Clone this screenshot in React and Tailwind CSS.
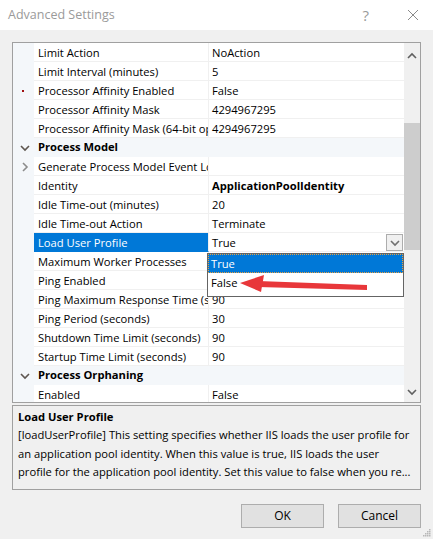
import React from 'react';

const rows = [
  { name: 'Limit Action', value: 'NoAction' },
  { name: 'Limit Interval (minutes)', value: '5' },
  { name: 'Processor Affinity Enabled', value: 'False', mark: true },
  { name: 'Processor Affinity Mask', value: '4294967295' },
  { name: 'Processor Affinity Mask (64-bit option)', value: '4294967295' },
  { category: 'Process Model' },
  { name: 'Generate Process Model Event Log Entry', value: '', expand: true },
  { name: 'Identity', value: 'ApplicationPoolIdentity', bold: true },
  { name: 'Idle Time-out (minutes)', value: '20' },
  { name: 'Idle Time-out Action', value: 'Terminate' },
  { name: 'Load User Profile', value: 'True', selected: true },
  // values under the open list are hidden by it
  { name: 'Maximum Worker Processes', value: '' },
  { name: 'Ping Enabled', value: '' },
  { name: 'Ping Maximum Response Time (seconds)', value: '90' },
  { name: 'Ping Period (seconds)', value: '30' },
  { name: 'Shutdown Time Limit (seconds)', value: '90' },
  { name: 'Startup Time Limit (seconds)', value: '90' },
  { category: 'Process Orphaning' },
  { name: 'Enabled', value: 'False' },
];

function Chevron({ dir = 'down', color = '#5b5b5b' }) {
  const d = {
    down: 'M1 3 L5 7 L9 3',
    up: 'M1 7 L5 3 L9 7',
    right: 'M3 1 L7 5 L3 9',
  }[dir];
  return (
    <svg width="10" height="10" viewBox="0 0 10 10">
      <path d={d} fill="none" stroke={color} strokeWidth="1.6" />
    </svg>
  );
}

function Row({ row }) {
  if (row.category) {
    return (
      <div className="flex h-[19px] bg-[#f4f7fa] items-center">
        <div className="w-[21px] flex justify-center pl-[2px]">
          <Chevron dir="down" color="#5e5650" />
        </div>
        <div className="pl-[4px] font-bold">{row.category}</div>
      </div>
    );
  }
  return (
    <div className="flex h-[19px]">
      <div className="w-[21px] shrink-0 bg-[#f4f7fa] flex items-center justify-center pl-[2px]">
        {row.mark && <div className="w-[2px] h-[2px] bg-[#a01010] mr-[3px]" />}
        {row.expand && <Chevron dir="right" color="#8c8c8c" />}
      </div>
      <div
        className={`w-[175px] shrink-0 overflow-hidden whitespace-nowrap pl-[4px] leading-[19px] border-b border-r ${
          row.selected ? 'bg-[#0078d7] text-white border-b-[#0078d7] border-r-[#f0f0f0]' : 'border-[#f0f0f0]'
        }`}
      >
        {row.name}
      </div>
      <div className="flex-1 relative overflow-hidden whitespace-nowrap pl-[3px] leading-[19px] border-b border-[#f0f0f0]">
        <span className={row.bold ? 'font-bold' : ''}>{row.value}</span>
        {row.selected && (
          <div className="absolute right-[1px] top-[1px] w-[17px] h-[17px] border border-[#adadad] bg-[#f0f0f0] flex items-center justify-center">
            <Chevron dir="down" color="#707070" />
          </div>
        )}
      </div>
    </div>
  );
}

export default function App() {
  return (
    <div
      className="relative w-[433px] h-[539px] bg-[#f0f0f0] text-[11.2px] text-black overflow-hidden"
      style={{ fontFamily: '"Open Sans", "Noto Sans", sans-serif' }}
    >
      {/* title bar */}
      <div className="h-[30px] bg-white flex items-center pl-[8px] pr-[14px]">
        <span className="text-[12.5px] text-[#9a9a9a] flex-1">Advanced Settings</span>
        <span className="text-[15px] text-[#9a9a9a] mr-[38px]">?</span>
        <svg width="12" height="12" viewBox="0 0 12 12">
          <path d="M1 1 L11 11 M11 1 L1 11" stroke="#8a8a8a" strokeWidth="1" />
        </svg>
      </div>

      <div className="px-[12px] pt-[12px]">
        {/* property grid */}
        <div className="h-[361px] border border-[#a0a0a0] bg-white flex overflow-hidden">
          <div className="relative w-[391px] shrink-0 overflow-hidden">
            {rows.map((row, i) => (
              <Row key={i} row={row} />
            ))}
            <div className="absolute left-[194px] top-[210px] w-[197px] h-[44px] border border-[#646464] bg-white">
              <div className="h-[19px] bg-[#0078d7] text-white pl-[2px] leading-[17px] border border-dotted border-[#e8a040]">
                True
              </div>
              <div className="h-[19px] pl-[3px] leading-[20px]">False</div>
            </div>
          </div>
          <div className="flex-1 bg-[#f0f0f0] flex flex-col">
            <div className="h-[17px] flex items-center justify-center mt-[4px]">
              <Chevron dir="up" color="#606060" />
            </div>
            <div className="h-[127px] bg-[#cdcdcd] mt-[59px]" />
            <div className="flex-1" />
            <div className="h-[17px] flex items-center justify-center mb-[2px]">
              <Chevron dir="down" color="#606060" />
            </div>
          </div>
        </div>

        {/* description */}
        <div className="mt-[2px] h-[85px] border border-[#a0a0a0] px-[5px] pt-[2px]">
          <div className="font-bold leading-[18px]">Load User Profile</div>
          <div className="leading-[18.5px] whitespace-nowrap">
            <div>[loadUserProfile] This setting specifies whether IIS loads the user profile for</div>
            <div>an application pool identity. When this value is true, IIS loads the user</div>
            <div>profile for the application pool identity. Set this value to false when you re...</div>
          </div>
        </div>

        <div className="flex justify-end gap-[14px] mt-[14px]">
          <button className="w-[83px] h-[24px] bg-[#e1e1e1] border border-[#adadad] text-[12px]">OK</button>
          <button className="w-[83px] h-[24px] bg-[#e1e1e1] border border-[#adadad] text-[12px]">Cancel</button>
        </div>
      </div>

      {/* size grip */}
      <svg className="absolute right-[2px] bottom-[2px]" width="8" height="8" viewBox="0 0 8 8">
        {[[6, 0], [4, 2], [6, 2], [2, 4], [4, 4], [6, 4], [0, 6], [2, 6], [4, 6], [6, 6]].map(([x, y], i) => (
          <rect key={i} x={x} y={y} width="1.5" height="1.5" fill="#b8b8b8" />
        ))}
      </svg>

      {/* red callout arrow */}
      <svg className="absolute inset-0 pointer-events-none" width="433" height="539" viewBox="0 0 433 539">
        <polygon points="258,281 367,285 367,290 258,287" fill="#e8373a" />
        <polygon points="240,283 264,275 261,292" fill="#e8373a" />
      </svg>
    </div>
  );
}
